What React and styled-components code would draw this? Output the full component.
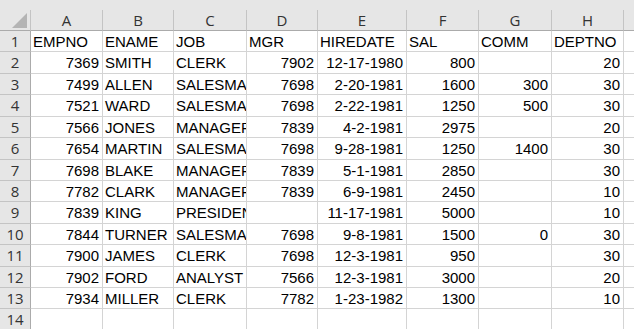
import React from "react";
import styled, { createGlobalStyle } from "styled-components";

const GlobalStyle = createGlobalStyle`
  html, body {
    margin: 0;
    padding: 0;
    background: #fff;
    overflow: hidden;
  }
`;

const columns = ["A", "B", "C", "D", "E", "F", "G", "H"];
const colWidths = [72, 71, 73, 71, 89, 72, 73, 72];
const rightCols = [0, 3, 4, 5, 6, 7];

const data = [
  ["EMPNO", "ENAME", "JOB", "MGR", "HIREDATE", "SAL", "COMM", "DEPTNO"],
  ["7369", "SMITH", "CLERK", "7902", "12-17-1980", "800", "", "20"],
  ["7499", "ALLEN", "SALESMAN", "7698", "2-20-1981", "1600", "300", "30"],
  ["7521", "WARD", "SALESMAN", "7698", "2-22-1981", "1250", "500", "30"],
  ["7566", "JONES", "MANAGER", "7839", "4-2-1981", "2975", "", "20"],
  ["7654", "MARTIN", "SALESMAN", "7698", "9-28-1981", "1250", "1400", "30"],
  ["7698", "BLAKE", "MANAGER", "7839", "5-1-1981", "2850", "", "30"],
  ["7782", "CLARK", "MANAGER", "7839", "6-9-1981", "2450", "", "10"],
  ["7839", "KING", "PRESIDENT", "", "11-17-1981", "5000", "", "10"],
  ["7844", "TURNER", "SALESMAN", "7698", "9-8-1981", "1500", "0", "30"],
  ["7900", "JAMES", "CLERK", "7698", "12-3-1981", "950", "", "30"],
  ["7902", "FORD", "ANALYST", "7566", "12-3-1981", "3000", "", "20"],
  ["7934", "MILLER", "CLERK", "7782", "1-23-1982", "1300", "", "10"],
  ["", "", "", "", "", "", "", ""],
];

// row boundaries follow a 21.42px pitch, snapped to whole pixels
const rowHeights = data.map(
  (_, i) => Math.round(31 + 21.42 * (i + 1)) - Math.round(31 + 21.42 * i)
);

const Sheet = styled.div`
  display: grid;
  grid-template-columns: 31px ${colWidths.map((w) => `${w}px`).join(" ")} 1fr;
  grid-template-rows: 10px 21px ${(p) => p.$rows};
  width: 634px;
  height: 329px;
  overflow: hidden;
  font-family: "Liberation Sans", Arial, sans-serif;
  font-size: 15px;
  color: #000;
`;

const TopStrip = styled.div`
  grid-column: 1 / -1;
  background: #e6e6e6;
`;

const Corner = styled.div`
  position: relative;
  background: #e6e6e6;
  border-right: 1px solid #c4c4c4;
  border-bottom: 1px solid #ababab;

  &::after {
    content: "";
    position: absolute;
    right: 3px;
    bottom: 2px;
    width: 0;
    height: 0;
    border-left: 15px solid transparent;
    border-bottom: 15px solid #b4b4b4;
  }
`;

const ColHead = styled.div`
  background: #e6e6e6;
  border-right: 1px solid #c4c4c4;
  border-bottom: 1px solid #ababab;
  font-family: "Open Sans", "Noto Sans", sans-serif;
  font-size: 15px;
  color: #333;
  display: flex;
  align-items: center;
  justify-content: center;
  line-height: 1;
`;

const RowHead = styled.div`
  background: #e6e6e6;
  border-right: 1px solid #ababab;
  border-bottom: 1px solid #c4c4c4;
  font-family: "Open Sans", "Noto Sans", sans-serif;
  font-size: 15px;
  color: #333;
  display: flex;
  align-items: center;
  justify-content: center;
  line-height: 1;
`;

const Cell = styled.div`
  border-right: 1px solid #d4d4d4;
  border-bottom: 1px solid #d4d4d4;
  padding: 0 ${(p) => (p.$right ? "3px" : "0")} 0 ${(p) => (p.$right ? "0" : "2px")};
  display: flex;
  align-items: center;
  justify-content: ${(p) => (p.$right ? "flex-end" : "flex-start")};
  white-space: nowrap;
  overflow: hidden;
  line-height: 1;
`;

const Filler = styled(Cell)`
  border-right: none;
`;

const FillerHead = styled(ColHead)`
  border-right: none;
`;

export default function App() {
  return (
    <>
      <GlobalStyle />
      <Sheet $rows={rowHeights.map((h) => `${h}px`).join(" ")}>
        <TopStrip />
        <Corner />
        {columns.map((c) => (
          <ColHead key={c}>{c}</ColHead>
        ))}
        <FillerHead />
        {data.map((row, r) => (
          <React.Fragment key={r}>
            <RowHead>{r + 1}</RowHead>
            {row.map((v, c) => (
              <Cell key={c} $right={r > 0 && rightCols.includes(c)}>
                {v}
              </Cell>
            ))}
            <Filler />
          </React.Fragment>
        ))}
      </Sheet>
    </>
  );
}
